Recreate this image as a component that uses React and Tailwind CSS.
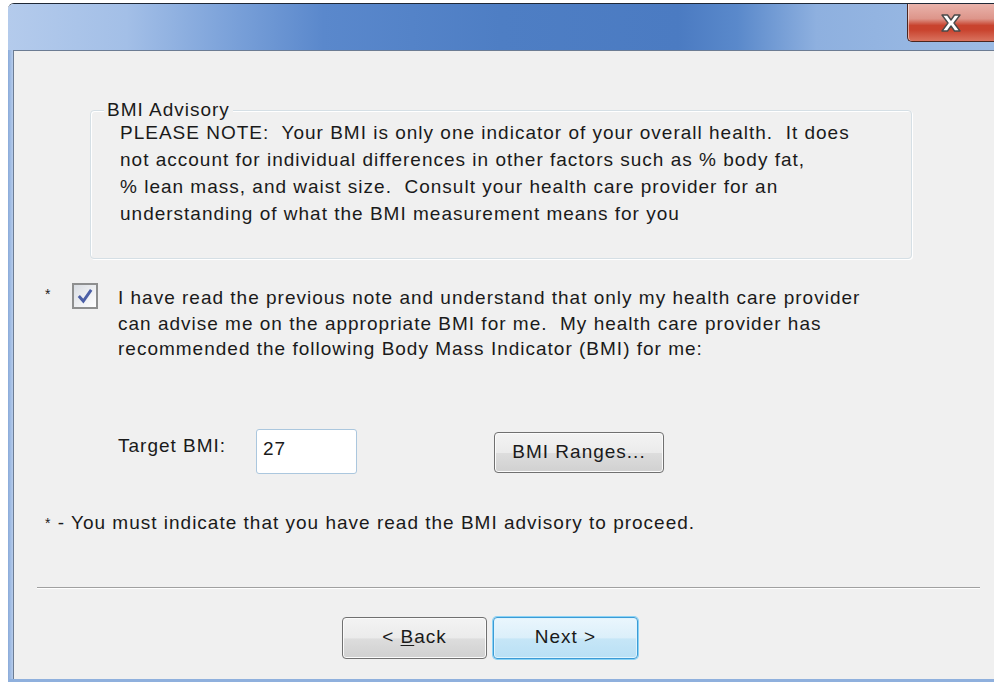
import React from "react";

// Win7-style close glyph: white X with a dark outline
const CloseGlyph = () => (
  <svg width="22" height="18" viewBox="0 0 22 18">
    <path
      d="M2 1 H7.5 L11 6 L14.5 1 H20 L14 9 L20 17 H14.5 L11 12 L7.5 17 H2 L8 9 Z"
      fill="#ffffff"
      stroke="#4a4a4a"
      strokeWidth="1.4"
      strokeLinejoin="round"
    />
  </svg>
);

const TitleBar = () => (
  <div className="h-[46px] flex justify-end bg-[linear-gradient(90deg,#b4cbec_0%,#a3bfe7_12%,#7da3da_22%,#5a88cc_32%,#4e7ec4_50%,#4b7bc2_68%,#5a89cb_74%,#8eb0df_82%,#9dbce5_100%)]">
    <div className="w-[87px] h-[38px] rounded-bl-[5px] border-l border-b border-[#4b2620] flex items-center justify-center bg-[linear-gradient(180deg,#e9b3ab_0%,#dd958a_40%,#c8432e_58%,#c9432e_70%,#d9735f_100%)] shadow-[inset_1px_0_0_rgba(255,255,255,0.5)]">
      <CloseGlyph />
    </div>
  </div>
);

const CheckBox = () => (
  <div className="w-[26px] h-[26px] border-2 border-[#8e8f8f] bg-[linear-gradient(135deg,#d9dde3_0%,#f4f5f7_70%,#ffffff_100%)] flex items-center justify-center">
    <svg width="18" height="18" viewBox="0 0 16 16">
      <path d="M2.5 8 L6.5 12.5 L13.5 2.5" fill="none" stroke="#4b5fa6" strokeWidth="2.6" />
    </svg>
  </div>
);

const WinButton = ({ children, primary }) => (
  <button
    className={`h-[42px] w-[145px] rounded-[4px] border flex items-center justify-center text-[19px] tracking-[1px] text-[#1a1a1a] ${
      primary
        ? "border-[#3c9bd6] shadow-[0_0_0_1px_#8ad3f5,inset_0_0_0_1px_#dff4fd] bg-[linear-gradient(180deg,#eaf6fd_0%,#dbeffa_50%,#c6e6f7_52%,#b9e0f5_100%)]"
        : "border-[#707070] shadow-[inset_0_0_0_1px_#fbfbfb] bg-[linear-gradient(180deg,#f3f3f3_0%,#ebebeb_50%,#dddddd_52%,#d0d0d0_100%)]"
    }`}
  >
    {children}
  </button>
);

export default function App() {
  return (
    <div className="w-[994px] h-[682px] bg-white overflow-hidden font-['Liberation_Sans',Arial,sans-serif] text-[19px] tracking-[1px] text-[#1a1a1a]">
      <div className="ml-[8px] mt-[3px] h-[679px] flex flex-col border-t border-[#1f2836] rounded-tl-[6px] overflow-hidden">
        <TitleBar />
        <div className="flex flex-1 min-h-0">
          <div className="w-[5px] bg-[linear-gradient(90deg,#8aabda,#b6ccec)]" />
          <div className="flex-1 bg-[#f0f0f0] border-l border-t border-[#6c7c93] flex flex-col">
            {/* advisory group box */}
            <div className="relative ml-[76px] mt-[59px] w-[822px] h-[149px] border border-[#d5dfe5] rounded-[4px] shadow-[inset_1px_1px_0_#ffffff,1px_1px_0_#ffffff] pt-[8px] pl-[29px]">
              <span className="absolute left-[13px] top-[-11px] px-[3px] bg-[#f0f0f0] leading-[20px]">
                BMI Advisory
              </span>
              <p className="leading-[27px] whitespace-nowrap">
                PLEASE NOTE:&nbsp; Your BMI is only one indicator of your overall health.&nbsp; It does
                <br />
                not account for individual differences in other factors such as % body fat,
                <br />
                % lean mass, and waist size.&nbsp; Consult your health care provider for an
                <br />
                understanding of what the BMI measurement means for you
              </p>
            </div>

            {/* acknowledgement */}
            <div className="flex items-start mt-[24px]">
              <span className="ml-[31px] w-[27px] text-[14px] leading-[14px] pt-[4px]">*</span>
              <CheckBox />
              <p className="ml-[20px] pt-[2px] leading-[25.5px] whitespace-nowrap">
                I have read the previous note and understand that only my health care provider
                <br />
                can advise me on the appropriate BMI for me.&nbsp; My health care provider has
                <br />
                recommended the following Body Mass Indicator (BMI) for me:
              </p>
            </div>

            {/* target value */}
            <div className="flex items-start mt-[67px]">
              <span className="ml-[104px] w-[138px] mt-[7px] leading-[20px] whitespace-nowrap">Target BMI:</span>
              <div className="w-[101px] h-[45px] bg-white border border-[#abc7de] rounded-[3px] pl-[6px] pt-[9px] leading-[20px]">
                27
              </div>
              <div className="ml-[137px] mt-[3px]">
                <button className="h-[41px] w-[170px] rounded-[4px] border border-[#707070] shadow-[inset_0_0_0_1px_#fbfbfb] bg-[linear-gradient(180deg,#f3f3f3_0%,#ebebeb_50%,#dddddd_52%,#d0d0d0_100%)] text-[19px] tracking-[1px] text-[#1a1a1a]">
                  BMI Ranges...
                </button>
              </div>
            </div>

            <p className="ml-[31px] mt-[39px] leading-[20px]">
              <span className="text-[14px] align-top">*</span> - You must indicate that you have read the BMI advisory to proceed.
            </p>

            <div className="ml-[23px] mt-[54px] w-[943px] h-[2px] border-t border-[#a0a0a0] border-b border-b-white" />

            <div className="flex mt-[28px] ml-[328px] gap-[6px]">
              <WinButton>
                &lt;&nbsp;<span className="underline underline-offset-2">B</span>ack
              </WinButton>
              <WinButton primary>Next &gt;</WinButton>
            </div>
          </div>
        </div>
        <div className="h-[3px] bg-[#8fb0dd]" />
      </div>
    </div>
  );
}
